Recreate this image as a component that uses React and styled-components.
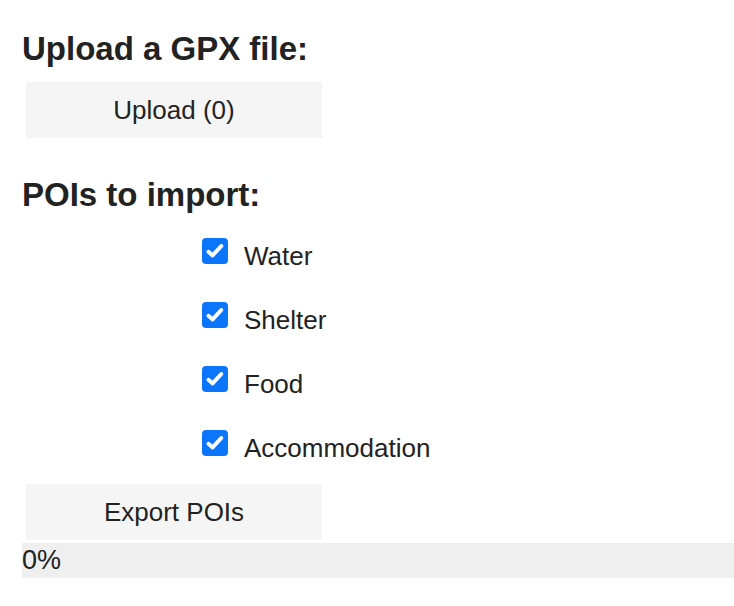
import React, { useState } from 'react';
import styled, { createGlobalStyle } from 'styled-components';

const GlobalStyle = createGlobalStyle`
  body {
    margin: 0;
    background: #fff;
    font-family: 'Liberation Sans', Arial, sans-serif;
    color: #222;
  }
`;

const POIS = ['Water', 'Shelter', 'Food', 'Accommodation'];

const App = () => {
  const [checked, setChecked] = useState(
    POIS.reduce((acc, p) => ({ ...acc, [p]: true }), {})
  );

  const toggle = (name) => {
    setChecked({ ...checked, [name]: !checked[name] });
  };

  return (
    <Page>
      <GlobalStyle />
      <Heading>Upload a GPX file:</Heading>
      <Button $top={14}>Upload (0)</Button>
      <Heading $top={38}>POIs to import:</Heading>
      <PoiList>
        {POIS.map((name) => (
          <PoiRow key={name} onClick={() => toggle(name)}>
            <Box $on={checked[name]}>
              {checked[name] && (
                <svg width="26" height="26" viewBox="0 0 26 26">
                  <path
                    d="M6.5 13.8 L10.6 17.4 L19.3 8"
                    fill="none"
                    stroke="#fff"
                    strokeWidth="4"
                    strokeLinecap="round"
                    strokeLinejoin="round"
                  />
                </svg>
              )}
            </Box>
            <Label>{name}</Label>
          </PoiRow>
        ))}
      </PoiList>
      <Button $top={8}>Export POIs</Button>
      <Progress>0%</Progress>
    </Page>
  );
};

const Page = styled.div`
  display: flex;
  flex-direction: column;
  align-items: flex-start;
  padding-left: 22px;
  padding-top: 30px;
`;

const Heading = styled.h2`
  margin: ${(p) => p.$top || 0}px 0 0;
  font-size: 33px;
  line-height: 38px;
  font-weight: 700;
  color: #222;
`;

const Button = styled.button`
  margin: ${(p) => p.$top}px 0 0 4px;
  width: 296px;
  height: 56px;
  padding: 0;
  border: none;
  background: #f5f5f5;
  font-family: 'Liberation Sans', Arial, sans-serif;
  font-size: 26px;
  color: #222;
  cursor: pointer;
`;

const PoiList = styled.div`
  margin: 6px 0 0 180px;
  display: flex;
  flex-direction: column;
`;

const PoiRow = styled.label`
  height: 64px;
  display: flex;
  align-items: flex-start;
  gap: 16px;
  cursor: pointer;
`;

const Box = styled.span`
  margin-top: 18px;
  width: 26px;
  height: 26px;
  border-radius: 4px;
  background: ${(p) => (p.$on ? '#0b75fc' : '#fff')};
  border: ${(p) => (p.$on ? 'none' : '1px solid #767676')};
  box-sizing: border-box;
  display: flex;
`;

const Label = styled.span`
  margin-top: 21px;
  font-size: 26px;
  line-height: 31px;
  color: #222;
`;

const Progress = styled.div`
  margin-top: 3px;
  align-self: stretch;
  height: 35px;
  background: #efefef;
  font-size: 27px;
  line-height: 35px;
  color: #222;
`;

export default App;
